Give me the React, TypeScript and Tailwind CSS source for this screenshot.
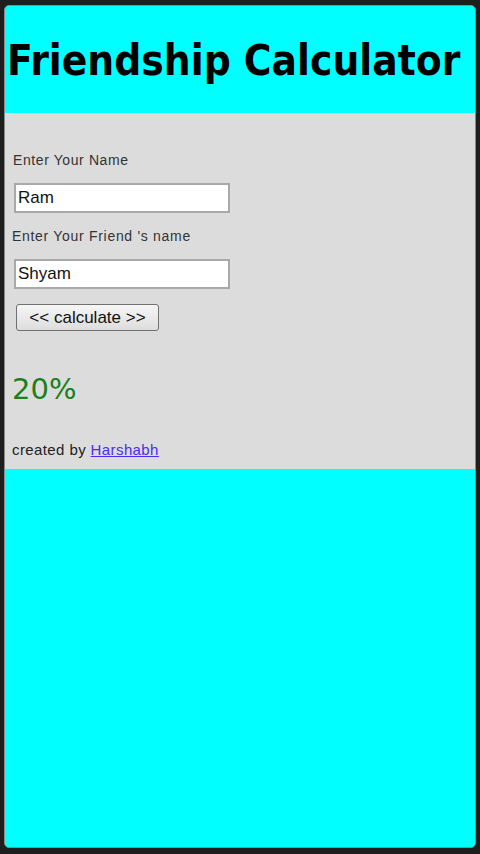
export default function App() {
  return (
    <div className="w-[480px] h-[854px] bg-[#1e1e1e] pt-[5px] pb-[6px] px-[4px]">
      <div className="h-full rounded-[5px] border-[1.5px] border-[#8a8a8a] bg-[#00ffff] overflow-hidden flex flex-col">
        <div className="h-[107px] flex items-center pl-[2px]">
          <h1 className="text-[42px] font-bold text-black whitespace-nowrap mt-[2px]" style={{ fontFamily: '"DejaVu Sans Condensed", "DejaVu Sans", Verdana, sans-serif', fontStretch: 'condensed' }}>
            Friendship Calculator
          </h1>
        </div>
        <div className="bg-[#dcdcdc] h-[356px] pl-[7px] pt-[39px]" style={{ fontFamily: '"Liberation Sans", Arial, sans-serif' }}>
          <div className="text-[14px] text-[#333] tracking-[0.6px] h-[16px] leading-[16px] pl-[1px]">Enter Your Name</div>
          <input
            readOnly
            value="Ram"
            className="mt-[15px] ml-[2px] block w-[216px] h-[30px] bg-white border-2 border-[#a9a9a9] px-[2px] text-[17px] text-[#111] outline-none"
          />
          <div className="mt-[15px] text-[14px] text-[#333] tracking-[0.7px] h-[16px] leading-[16px]">Enter Your Friend 's name</div>
          <input
            readOnly
            value="Shyam"
            className="mt-[15px] ml-[2px] block w-[216px] h-[30px] bg-white border-2 border-[#a9a9a9] px-[2px] text-[17px] text-[#111] outline-none"
          />
          <button className="mt-[15px] ml-[4px] block w-[143px] h-[27px] rounded-[3px] border border-[#707070] bg-gradient-to-b from-[#f6f6f6] to-[#dddddd] text-[17px] text-[#111] leading-none">
            &lt;&lt; calculate &gt;&gt;
          </button>
          <div className="mt-[40px] text-[29px] text-[#1a801a] leading-[36px]" style={{ fontFamily: '"DejaVu Sans", Verdana, sans-serif' }}>
            20%
          </div>
          <div className="mt-[34px] text-[15px] text-[#222] leading-[18px] tracking-[0.4px]">
            created by <a href="#" className="text-[#4a2cf0] underline">Harshabh</a>
          </div>
        </div>
        <div className="flex-1" />
      </div>
    </div>
  );
}
